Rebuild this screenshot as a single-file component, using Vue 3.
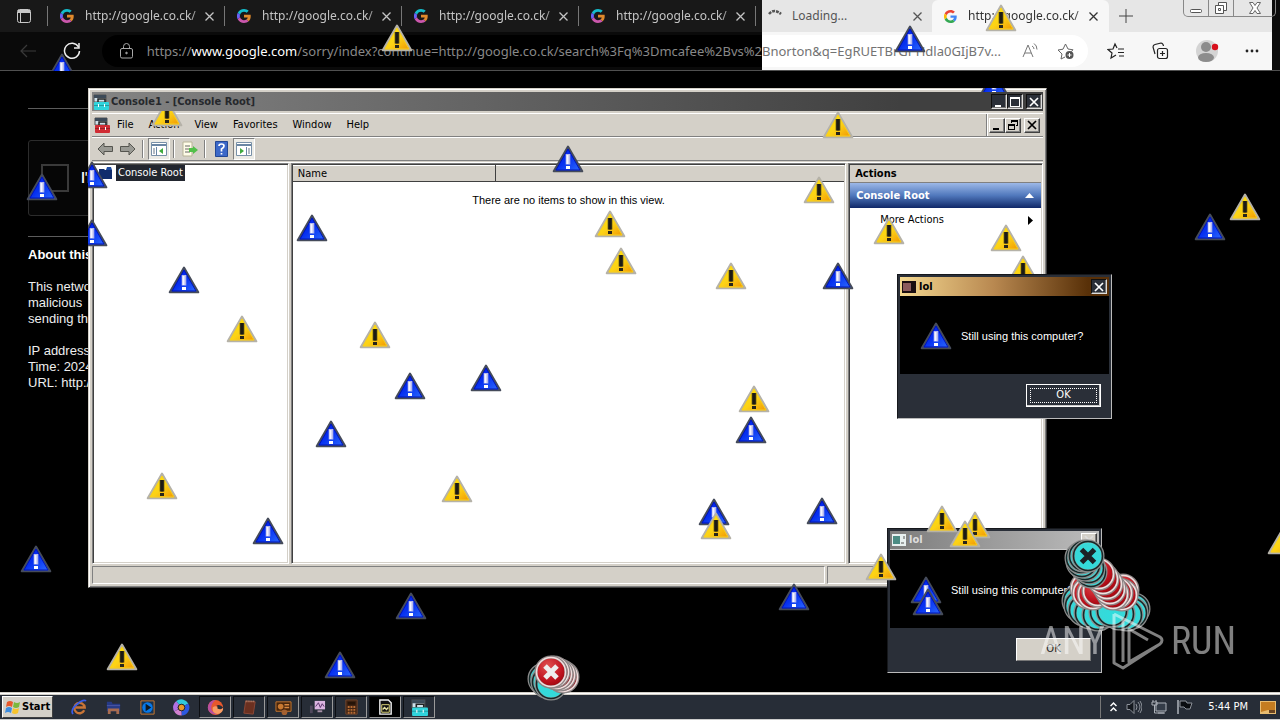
<script setup>
const tabs = [1, 2, 3, 4]

const warnings = [
  ['blue', 42, 187], ['blue', 184, 280], ['blue', 312, 228], ['blue', 568, 159],
  ['blue', 838, 276], ['blue', 410, 386], ['blue', 486, 378], ['blue', 331, 434],
  ['blue', 751, 430], ['blue', 714, 512], ['blue', 822, 511], ['blue', 268, 531],
  ['blue', 36, 559], ['blue', 411, 606], ['blue', 340, 665], ['blue', 794, 597],
  ['blue', 1210, 227], ['blue', 910, 39], ['blue', 928, 602],
  ['blue', 62, 67, 'inset(0 0 10px 0)'],
  ['blue', 994, 84, 'inset(18px 0 6px 0)'],
  ['blue', 92, 175, 'inset(0 0 0 12px)'],
  ['blue', 92, 233, 'inset(0 0 0 12px)'],
  ['gold', 397, 38], ['gold', 1001, 18], ['gold', 167, 113, 'inset(12px 0 0 0)'],
  ['gold', 838, 125], ['gold', 819, 190], ['gold', 610, 224], ['gold', 621, 261],
  ['gold', 731, 276], ['gold', 889, 231], ['gold', 1006, 238],
  ['gold', 1023, 269, 'inset(0 0 9px 0)'], ['gold', 242, 329], ['gold', 375, 335],
  ['gold', 754, 399], ['gold', 162, 486], ['gold', 457, 489], ['gold', 716, 526],
  ['gold', 122, 657], ['gold', 942, 519], ['gold', 975, 525], ['gold', 965, 534],
  ['gold', 881, 567], ['gold', 1245, 207], ['gold', 1283, 541]
].map(([kind, x, y, clip]) => ({
  kind,
  style: { left: x - 16 + 'px', top: y - 14 + 'px', clipPath: clip || 'none' }
}))

const errors = [
  ['teal', 544, 679], ['teal', 547, 682], ['teal', 551, 684],
  ['red', 563, 677], ['red', 560, 675], ['red', 557, 674], ['red', 554, 672], ['red', 551, 672, true],
  ['teal', 1078, 601], ['teal', 1080, 606], ['teal', 1084, 610],
  ['teal', 1090, 613], ['teal', 1098, 615], ['teal', 1105, 612],
  ['teal', 1134, 609], ['teal', 1132, 613], ['teal', 1127, 615], ['teal', 1119, 614], ['teal', 1112, 611],
  ['red', 1086, 588], ['red', 1088, 593], ['red', 1093, 594], ['red', 1098, 591],
  ['red', 1123, 590], ['red', 1122, 595], ['red', 1117, 593], ['red', 1113, 594],
  ['red', 1110, 589], ['red', 1107, 584], ['red', 1103, 579], ['red', 1099, 574],
  ['teal', 1091, 572], ['teal', 1089, 568], ['teal', 1085, 565], ['teal', 1082, 562],
  ['teal', 1081, 558], ['teal', 1084, 556], ['teal', 1088, 556, true]
].map(([kind, x, y, cross]) => ({ kind, cross, style: { left: x - 17 + 'px', top: y - 17 + 'px' } }))

const menus = ['File', 'Action', 'View', 'Favorites', 'Window', 'Help']
</script>

<template>
  <main class="desktop">
    <svg class="defs" aria-hidden="true">
      <defs>
        <linearGradient id="blueFill" x1="0" y1="0" x2="1" y2="1">
          <stop offset="0" stop-color="#0018e8" /><stop offset=".5" stop-color="#0630f0" /><stop offset="1" stop-color="#3070ff" />
        </linearGradient>
        <linearGradient id="goldFill" x1="0" y1="0" x2="1" y2="1">
          <stop offset="0" stop-color="#fff200" /><stop offset=".55" stop-color="#fcd116" /><stop offset="1" stop-color="#f09000" />
        </linearGradient>
        <radialGradient id="redFill" cx=".4" cy=".3" r=".8">
          <stop offset="0" stop-color="#e05050" /><stop offset=".6" stop-color="#c01420" /><stop offset="1" stop-color="#900008" />
        </radialGradient>
        <radialGradient id="tealFill" cx=".5" cy=".6" r=".7">
          <stop offset="0" stop-color="#30dcdc" /><stop offset=".7" stop-color="#38d8d8" /><stop offset="1" stop-color="#58f0ec" />
        </radialGradient>
      </defs>
      <symbol id="warn-blue" viewBox="0 0 32 28">
        <path d="M16 1.500 30.300 26.300H1.700z" fill="url(#blueFill)" stroke="#454b5a" stroke-width="2" stroke-linejoin="round" />
        <path d="M16 4 28 25H4z" fill="none" stroke="#0014b8" />
        <path d="M13.700 9h4.600v10.500h-4.600z" fill="#b4b8ec" /><path d="M14 21h4v3h-4z" fill="#fff" />
        <path d="M14.500 10h2v9h-2z" fill="#f4f4ff" />
      </symbol>
      <symbol id="warn-gold" viewBox="0 0 32 28">
        <path d="M16 1.500 30.300 26.300H1.700z" fill="url(#goldFill)" stroke="#b5b2a8" stroke-width="2" stroke-linejoin="round" />
        <path d="M16 4 28 25H4z" fill="none" stroke="#f7cf20" />
        <path d="M13.700 8h4.600v11.500h-4.600z" fill="#4c4518" /><path d="M14.500 8h3v11.500h-3z" fill="#1c1a14" /><path d="M14 21h4v3h-4z" fill="#28251a" />
      </symbol>
      <symbol id="err-red" viewBox="0 0 34 34">
        <circle cx="17" cy="17" r="15" fill="url(#redFill)" stroke="#8b8585" stroke-width="3" />
        <circle cx="17" cy="17" r="14.500" fill="none" stroke="#f3dede" stroke-width="1.500" />
      </symbol>
      <symbol id="cross-red" viewBox="0 0 34 34"><path d="m11 11 12 12M23 11 11 23" stroke="#eee" stroke-width="5" /></symbol>
      <symbol id="err-teal" viewBox="0 0 34 34">
        <circle cx="17" cy="17" r="15" fill="url(#tealFill)" stroke="#8c8c8c" stroke-width="3" />
        <circle cx="17" cy="17" r="14.500" fill="none" stroke="#142828" stroke-width="1.500" />
      </symbol>
      <symbol id="cross-teal" viewBox="0 0 34 34"><path d="m10.500 10.500 13 13M23.500 10.500l-13 13" stroke="#1c2226" stroke-width="5" /></symbol>
      <symbol id="toolbox" viewBox="0 0 16 16">
        <path d="M1 1h12v7H1z" fill="#cfe0ea" stroke="#555" /><path d="M1 1h12v3H1z" fill="#3c4a58" />
        <path d="M5 8V5h7v3" fill="none" stroke="#222" stroke-width="1.500" />
        <rect x="1" y="8" width="15" height="8" rx="1" fill="currentColor" /><path d="M1 11.500h15" stroke="#0004" /><path d="M5 10h1v3H5zM11 10h1v3h-1z" fill="#fff" />
      </symbol>
      <symbol id="g-logo" viewBox="0 0 48 48">
        <path fill="var(--r)" d="M24 9.500c3.500 0 6.700 1.200 9.200 3.600l6.900-6.900C35.900 2.400 30.500 0 24 0 14.600 0 6.500 5.400 2.600 13.200l8 6.200C12.400 13.700 17.700 9.500 24 9.500z" />
        <path fill="var(--b)" d="M47 24.600c0-1.600-.2-3.100-.4-4.600H24v9h12.900c-.6 3-2.200 5.500-4.700 7.200l7.700 6C44.400 38 47 31.800 47 24.600z" />
        <path fill="var(--y)" d="M10.500 28.600A14.500 14.500 0 0 1 10.500 19.400l-8-6.200a24 24 0 0 0 0 21.600z" />
        <path fill="var(--g)" d="M24 48c6.500 0 11.900-2.100 15.900-5.800l-7.700-6c-2.200 1.500-4.900 2.300-8.200 2.300-6.300 0-11.600-4.200-13.500-9.900l-8 6.200C6.500 42.600 14.600 48 24 48z" />
      </symbol>
    </svg>

    <header class="browser">
      <div class="strip dark">
        <button class="lead" aria-label="Tab actions">
          <svg width="16" height="16" viewBox="0 0 16 16" fill="none" stroke="#c8c8c8"><rect x="1.500" y="1.500" width="13" height="13" rx="2" /><path d="M2 3.500h12" stroke-width="3" /><path d="M4.500 5v9" /></svg>
        </button>
        <div v-for="t in tabs" :key="t" class="tab">
          <svg class="fav inv" width="14" height="14"><use href="#g-logo" /></svg>
          <span class="tabname fade">http://google.co.ck/</span>
          <button class="x" aria-label="Close tab"><svg width="9" height="9" viewBox="0 0 9 9" stroke="currentColor" stroke-width="1.300"><path d="m.5.5 8 8m0-8-8 8" /></svg></button>
        </div>
        <i class="sep"></i>
      </div>
      <div class="strip light">
        <div class="tab loading">
          <svg class="spin" width="14" height="14" viewBox="0 0 14 14" fill="none" stroke="#555" stroke-width="2.500"><path d="M1 5Q6-1 13 5" stroke-dasharray="3 1" /></svg>
          <span class="tabname">Loading...</span>
          <button class="x" aria-label="Close tab"><svg width="9" height="9" viewBox="0 0 9 9" stroke="currentColor" stroke-width="1.300"><path d="m.5.5 8 8m0-8-8 8" /></svg></button>
        </div>
        <div class="tab current">
          <svg class="fav" width="13" height="13"><use href="#g-logo" /></svg>
          <span class="tabname fade">http://google.co.ck/</span>
          <button class="x" aria-label="Close tab"><svg width="9" height="9" viewBox="0 0 9 9" stroke="currentColor" stroke-width="1.300"><path d="m.5.5 8 8m0-8-8 8" /></svg></button>
        </div>
        <button class="plus" aria-label="New tab"><svg width="14" height="14" viewBox="0 0 14 14" stroke="#444"><path d="M7 0v14M0 7h14" /></svg></button>
        <div class="aero">
          <button aria-label="Minimize"><svg width="14" height="14" viewBox="0 0 14 14" fill="#fff" stroke="#555"><rect x="1.500" y="8.500" width="11" height="3" rx="1" /></svg></button>
          <button aria-label="Restore"><svg width="14" height="14" viewBox="0 0 14 14" fill="#fff" stroke="#555"><path d="M4.500 1.500h8v8h-8z" /><path d="M1.500 4.500h8v8h-8z" /><path d="M4.500 7.500h2v2h-2z" /></svg></button>
          <button class="wide" aria-label="Close"><svg width="14" height="14" viewBox="0 0 14 14" fill="#fff" stroke="#666"><path d="M1.500 1.500h3.500l2 3 2-3h3.500L9 7l3.500 5.500H9l-2-3-2 3H1.500L5 7z" /></svg></button>
        </div>
      </div>

      <div class="bar dark">
        <button class="nav" aria-label="Back"><svg width="16" height="14" viewBox="0 0 16 14" fill="none" stroke="#3a3a3a" stroke-width="1.200"><path d="M16 7H1M7 1 1 7l6 6" /></svg></button>
        <button class="nav reload" aria-label="Refresh"><svg width="18" height="18" viewBox="0 0 18 18" fill="none" stroke="#eee" stroke-width="1.500"><path d="M15.500 5A7.500 7.500 0 1 0 16.500 9" /><path d="M16 1v5h-5" /></svg></button>
        <div class="pill left">
          <svg class="lock" width="13" height="16" viewBox="0 0 13 16" fill="none" stroke="#a8a8a8"><rect x=".5" y="5.500" width="12" height="9.500" rx="1.500" /><path d="M3.500 5V3.500a3 3 0 0 1 6 0V5" /><circle cx="6.500" cy="10" r=".8" fill="#aaa" /></svg>
          <span class="url">https://<b>www.google.com</b>/sorry/index?continue=http://google.co.ck/search%3Fq%3Dmcafee%2Bvs%2</span>
        </div>
      </div>
      <div class="bar light">
        <div class="pill right">
          <span class="url">Bnorton&amp;q=EgRUETBrGPHdla0GIjB7v...</span>
          <button class="ic" aria-label="Read aloud"><svg width="18" height="18" viewBox="0 0 18 18" fill="none" stroke="#777"><path d="m2 15 5-12 5 12M4 11h6M11 4q2 1 2 3M13 1.500q3 2 3 6" /></svg></button>
          <button class="ic" aria-label="Add to favorites"><svg width="18" height="18" viewBox="0 0 18 18" fill="none" stroke="#666"><path d="M8 15 4 17l1-5-4-4 5-.8L8.500 2 11 7l5 .8-2 2" /><circle cx="12.500" cy="13" r="4" fill="#555" stroke="none" /><path d="M12.500 11v4m-2-2h4" stroke="#fff" /></svg></button>
        </div>
        <button class="ic" aria-label="Favorites"><svg width="18" height="18" viewBox="0 0 18 18" fill="none" stroke="#222" stroke-width="1.200"><path d="m10 6-2-4-2 5-5 .5L5 11l-1 5 5-3M11 7h6m-6 3.500h6M12 14h5" /></svg></button>
        <button class="ic" aria-label="Collections"><svg width="18" height="18" viewBox="0 0 18 18" fill="none" stroke="#222" stroke-width="1.200"><rect x="6.500" y="6.500" width="10" height="10" rx="2" /><path d="M11.500 9v5M9 11.500h5M4 12 2 5q0-2 2-2.500L10 1q2 0 2.500 3" /></svg></button>
        <button class="ic" aria-label="Profile"><svg width="24" height="24" viewBox="0 0 24 24"><circle cx="12" cy="12" r="11" fill="#d4d4d4" /><circle cx="11" cy="8" r="5" fill="#8c8c8c" /><ellipse cx="11" cy="18.500" rx="8" ry="4.500" fill="#8c8c8c" /><circle cx="20" cy="8" r="3.200" fill="#d8101c" /></svg></button>
        <button class="ic" aria-label="More"><svg width="14" height="4" viewBox="0 0 14 4" fill="#222"><circle cx="2" cy="2" r="1.400" /><circle cx="7" cy="2" r="1.400" /><circle cx="12" cy="2" r="1.400" /></svg></button>
      </div>
    </header>

    <section class="page">
      <hr />
      <label class="captcha"><input type="checkbox" /><span>I'm not a robot</span></label>
      <hr />
      <h1>About this page</h1>
      <p>This network<br />malicious<br />sending the</p>
      <p>IP address:<br />Time: 2024<br />URL: http://</p>
    </section>

    <section class="console win">
      <div class="caption">
        <svg class="teal" width="16" height="16"><use href="#toolbox" /></svg>
        <h2>Console1 - [Console Root]</h2>
        <button class="cb night" aria-label="Minimize"><svg viewBox="0 0 12 10"><path d="M2 8h6v2H2z" /></svg></button>
        <button class="cb night" aria-label="Maximize"><svg viewBox="0 0 12 10"><path d="M1 0h10v10H1zM2 2v7h8V2z" fill-rule="evenodd" /></svg></button>
        <button class="cb night gap" aria-label="Close"><svg viewBox="0 0 12 10"><path d="m2 1 8 8m0-8-8 8" stroke="currentColor" stroke-width="1.700" /></svg></button>
      </div>
      <div class="menu">
        <svg class="redbox" width="16" height="16"><use href="#toolbox" /></svg>
        <button v-for="m in menus" :key="m">{{ m }}</button>
        <div class="mdi">
          <button class="cb" aria-label="Minimize console"><svg viewBox="0 0 12 10"><path d="M2 8h6v2H2z" /></svg></button>
          <button class="cb" aria-label="Restore console"><svg viewBox="0 0 12 10"><path d="M4 0h7v6H9V5h1V2H5v1H4zM1 4h7v6H1zM2 6v3h5V6z" fill-rule="evenodd" /></svg></button>
          <button class="cb gap" aria-label="Close console"><svg viewBox="0 0 12 10"><path d="m2 1 8 8m0-8-8 8" stroke="currentColor" stroke-width="1.700" /></svg></button>
        </div>
      </div>
      <div class="tools">
        <button aria-label="Back"><svg width="16" height="14" viewBox="0 0 16 14" fill="#9a9a94" stroke="#55554f"><path d="M1 7 7 1v3.500h8.500v5H7V13z" /></svg></button>
        <button aria-label="Forward"><svg width="16" height="14" viewBox="0 0 16 14" fill="#9a9a94" stroke="#55554f"><path d="M15 7 9 1v3.500H.5v5H9V13z" /></svg></button>
        <i></i>
        <button class="on" aria-label="Show tree"><svg width="16" height="14" viewBox="0 0 16 14"><path d="M.5.5h15v13H.5z" fill="#fff" stroke="#7890a8" /><path d="M1 3h14" stroke="#6a86a4" stroke-width="2" /><path d="M5.500 5v8" stroke="#6a86a4" /><path d="M2 7h2M2 9h2M2 11h2" stroke="#678" /><path d="m12 6-4 3 4 3z" fill="#3faa3f" /></svg></button>
        <i></i>
        <button aria-label="Export list"><svg width="17" height="16" viewBox="0 0 17 16"><path d="M1 1h9v14H1z" fill="#fffce8" stroke="#b8b498" /><path d="M3 5h5M3 8h5M3 11h5" stroke="#666" /><path d="M7 7h4V5l5 4-5 4v-2H7z" fill="#52c04a" /></svg></button>
        <i></i>
        <button aria-label="Help"><svg width="13" height="16" viewBox="0 0 13 16"><path d="M.5.5h12v15H.5z" fill="#3c68c8" stroke="#234794" /><path d="M4 5q0-2 2.500-2T9 5q0 1.500-2.500 3v2.500M6.500 12v1.500" fill="none" stroke="#fff" stroke-width="1.700" /></svg></button>
        <button class="on" aria-label="Show action pane"><svg width="16" height="14" viewBox="0 0 16 14"><path d="M.5.5h15v13H.5z" fill="#fff" stroke="#7890a8" /><path d="M1 3h14" stroke="#6a86a4" stroke-width="2" /><path d="M10.500 5v8" stroke="#6a86a4" /><path d="M12 7h2M12 9h2M12 11h2" stroke="#678" /><path d="m4 6 4 3-4 3z" fill="#3faa3f" /></svg></button>
      </div>
      <div class="panes">
        <div class="pane tree">
          <div class="node"><svg width="15" height="14" viewBox="0 0 15 14"><path d="M1 3h5l1 1h7v9H1z" fill="#102c6c" /><path d="M9 1h4l1 3H8z" fill="#1c4aa0" /></svg><span>Console Root</span></div>
        </div>
        <div class="pane list">
          <div class="cols"><span>Name</span><span></span></div>
          <p>There are no items to show in this view.</p>
        </div>
        <div class="pane actions">
          <h3>Actions</h3>
          <button class="group">Console Root<svg width="9" height="5" viewBox="0 0 9 5"><path d="M0 5 4.500 0 9 5z" fill="#fff" /></svg></button>
          <button class="more">More Actions<svg width="5" height="9" viewBox="0 0 5 9"><path d="m0 0 5 4.500L0 9z" /></svg></button>
        </div>
      </div>
      <div class="status"><span></span><span></span><span></span></div>
    </section>

    <section class="dialog win first">
      <div class="caption">
        <svg width="14" height="12" viewBox="0 0 14 12"><path d="M0 0h14v12H0z" fill="#1a0d10" /><path d="M1 2h8v8H1z" fill="#8c5a5c" /></svg>
        <h2>lol</h2>
        <button class="cb night" aria-label="Close"><svg viewBox="0 0 12 10"><path d="m2 1 8 8m0-8-8 8" stroke="currentColor" stroke-width="1.700" /></svg></button>
      </div>
      <div class="msg"><svg width="32" height="28"><use href="#warn-blue" /></svg><p>Still using this computer?</p></div>
      <div class="foot"><button class="ok focus">OK</button></div>
    </section>

    <section class="dialog win second">
      <div class="caption">
        <svg width="14" height="12" viewBox="0 0 14 12"><path d="M0 0h14v12H0z" fill="#e8f0f0" /><path d="M1 2h7v8H1z" fill="#4c8c84" /><path d="M12 2v3M9 9h3" stroke="#555" /></svg>
        <h2>lol</h2>
        <button class="cb" aria-label="Close"><svg viewBox="0 0 12 10"><path d="m2 1 8 8m0-8-8 8" stroke="currentColor" stroke-width="1.700" /></svg></button>
      </div>
      <div class="msg"><svg width="32" height="28"><use href="#warn-blue" /></svg><p>Still using this computer?</p></div>
      <div class="foot"><button class="ok">OK</button></div>
    </section>

    <footer class="taskbar">
      <button class="start">
        <svg width="16" height="16" viewBox="0 0 16 16"><path d="M2 3q3-2 6 0L7 8Q4 6 1 8z" fill="#e8582c" /><path d="M9 3q3 2 6 0l-1 5q-3 2-6 0z" fill="#7cb83c" /><path d="M1 9q3-2 6 0l-1 5q-3-2-6 0z" fill="#3c8ce0" /><path d="M8 9q3 2 6 0l-1 5q-3 2-6 0z" fill="#f8c42c" /></svg>
        Start
      </button>
      <div class="apps">
        <button aria-label="Internet Explorer"><svg viewBox="0 0 18 18" fill="none"><path d="M14 12a5.500 5.500 0 1 1 .5-3H5" stroke="#c87436" stroke-width="2.500" /><path d="M2 16Q-1 11 7 5q6-5 9-3" stroke="#385ce8" stroke-width="1.800" /></svg></button>
        <button aria-label="Explorer"><svg viewBox="0 0 18 18"><path d="M2 3h5l1 2h8v8H2z" fill="#263a86" /><path d="M3 10h12v6h-3v-3H6v3H3z" fill="#a86c50" /><path d="M2 7h14" stroke="#4c58a8" /></svg></button>
        <button aria-label="Media Player"><svg viewBox="0 0 18 18"><path d="M2 2h14v14H2z" fill="#163454" stroke="#cd7a30" /><circle cx="9" cy="9" r="5.500" fill="#0878e8" /><path d="m7 5 6 4-6 4z" fill="#101820" /></svg></button>
        <button aria-label="Chrome"><svg viewBox="0 0 18 18" fill="none" stroke-width="5"><path d="M3.500 12A6 6 0 0 1 5 4" stroke="#b070e0" /><path d="M5 4a6 6 0 0 1 9 2" stroke="#30c8dc" /><path d="M14 6a6 6 0 0 1-5 9" stroke="#2c58e0" /><path d="M9 15a6 6 0 0 1-5.500-3" stroke="#d080d0" /><circle cx="9" cy="9" r="3.500" fill="#e89828" stroke="#222" stroke-width="1" /></svg></button>
        <button class="open" aria-label="Edge"><svg viewBox="0 0 18 18"><circle cx="9" cy="9" r="8" fill="#e8582c" /><path d="M2 13A8 8 0 0 1 9 1Q3 6 5 12q2 3 6 4-6 1-9-3z" fill="#b850a0" /><path d="M17 9q-2 3-5 1-2-4-6-1-1 6 5 7 5-1 6-5z" fill="#f89c64" /><path d="M17 9q-2 3-6 1 1-2-1-3 4-2 7 2z" fill="#272d37" /></svg></button>
        <button class="open" aria-label="Notepad"><svg viewBox="0 0 18 18"><path d="m5 2 10 1-2 13-10-1z" fill="#6b3020" stroke="#8c4836" /><path d="M5 2.500h10" stroke="#bb8870" stroke-dasharray="1 1" stroke-width="2" /></svg></button>
        <button class="open" aria-label="System"><svg viewBox="0 0 18 18"><path d="M1 3h16v10H1z" fill="#48260c" stroke="#c87830" /><circle cx="6" cy="8" r="3" fill="#c87830" /><path d="M10 6h5M10 9h5" stroke="#d88840" stroke-width="1.500" /><circle cx="10" cy="14" r="3" fill="#a46030" /></svg></button>
        <button class="open" aria-label="Performance"><svg viewBox="0 0 18 18"><path d="M6 2h11v9H6z" fill="#dbb4e0" /><path d="m7 8 3-4 2 5 2-4 2 3" fill="none" stroke="#583068" /><path d="M1 7h3v8H1z" fill="#50485c" /><path d="M9 12h5v2H9z" fill="#a890a8" /></svg></button>
        <button class="open" aria-label="Calculator"><svg viewBox="0 0 18 18"><path d="M3 1h12v15H3z" fill="#402414" stroke="#75462c" /><path d="M5 3h8v3H5z" fill="#261408" /><path d="M5 8.500h8M5 11.500h8M5 14.500h8" stroke="#b86c34" stroke-width="2" stroke-dasharray="2 1" /></svg></button>
        <button class="open active" aria-label="Command"><svg viewBox="0 0 18 18" fill="none"><path d="M3 1h9l3 3v12H3z" fill="#101010" stroke="#eee" stroke-width="1.500" /><path d="M5 6h8v8H5z" stroke="#e0d878" /><path d="m6 11 2-2 2 2 2-2" stroke="#e8e4a0" stroke-width="1.500" /></svg></button>
        <button class="open" aria-label="Console"><svg class="teal" viewBox="0 0 18 18"><use href="#toolbox" width="18" height="18" /></svg></button>
      </div>
      <div class="tray">
        <svg width="7" height="12" viewBox="0 0 7 12" fill="none" stroke="#fff" stroke-width="1.500"><path d="m.5 5 3-3 3 3m-6 5 3-3 3 3" /></svg>
        <svg width="16" height="16" viewBox="0 0 16 16" fill="none" stroke="#8d929a"><path d="M1 5.500h3l4-4v13l-4-4H1z" fill="#14181e" /><path d="M10 5q2 3 0 6M12 3q4 5 0 10M14 2q4 6 0 12" /></svg>
        <svg width="16" height="16" viewBox="0 0 16 16" fill="none" stroke="#adb2ba"><path d="M5 4h10v8H5z" fill="#343c48" /><path d="M2 1v2M5 1v2M1 3h5v3H1zM3.500 6v8H13M7 14h7" /></svg>
        <svg width="17" height="16" viewBox="0 0 17 16" fill="none" stroke="#8d929a"><path d="M2 1v14" stroke-width="2" /><path d="M4 2h6l1 2h5l-2 6h-4L8 8H4z" fill="#0a0c10" /></svg>
        <time>5:44 PM</time>
        <svg width="16" height="13" viewBox="0 0 16 13"><path d="M0 0h16v13H0z" fill="#e8bc70" /><path d="M1 1h14v8L8 9l-7 2z" fill="#c47c20" /><path d="M9 9h6v3H9z" fill="#6b4420" /></svg>
      </div>
    </footer>

    <svg v-for="(w, i) in warnings" :key="'w' + i" class="sprite tri" :style="w.style"><use :href="'#warn-' + w.kind" /></svg>
    <svg v-for="(e, i) in errors" :key="'e' + i" class="sprite disc" :style="e.style">
      <use :href="'#err-' + e.kind" /><use v-if="e.cross" :href="'#cross-' + e.kind" />
    </svg>

    <div class="watermark">
      <span>ANY</span>
      <svg width="54" height="60" viewBox="0 0 54 60" fill="none" stroke="#fff" stroke-width="3" stroke-linejoin="round"><path d="M3 3v49l9 5 37-24M3 3l46 23q4 3 0 7L18 51V18l19 11M12 8v43" /></svg>
      <span>RUN</span>
    </div>
  </main>
</template>

<style>
html, body { margin: 0; background: #000; }
</style>

<style scoped>
* { box-sizing: border-box; }
button { font: inherit; color: inherit; border: 0; padding: 0; margin: 0; background: none; }
h1, h2, h3, p { margin: 0; font-size: inherit; }
svg { display: block; flex: none; }
.defs { position: absolute; width: 0; height: 0; }
.desktop { position: relative; min-height: 100vh; overflow: hidden; background: #000; color: #000; display: flex; flex-direction: column; font: 11px/14px "DejaVu Sans Condensed", "Noto Sans", sans-serif; }

.browser { display: grid; grid-template-columns: 762fr 510fr 8px; grid-template-rows: 32px 38px; border-bottom: 1px solid #505050; background: #0c0c0c; font-family: "Noto Sans", sans-serif; }
.strip, .bar { display: flex; align-items: center; min-width: 0; }
.strip.dark { background: #181818; color: #c4c4c4; grid-column: 1; }
.strip.light { background: #e6e6e6; color: #555; grid-column: 2; }
.bar.dark { background: #0a0a0a; grid-column: 1; }
.bar.light { background: #f7f7f7; grid-column: 2; }
.lead { width: 47px; display: flex; justify-content: center; }
.tab { flex: 1; min-width: 0; height: 20px; display: flex; align-items: center; padding: 0 10px 0 12px; border-left: 1px solid #777; font-size: 12px; line-height: 16px; }
.fav { --r: #ea4335; --b: #4285f4; --y: #fbbc05; --g: #34a853; margin-right: 11px; }
.fav.inv { --r: #15bcca; --b: #e08a2c; --y: #6a62f8; --g: #cb57ac; }
.tabname { flex: 1; min-width: 0; overflow: hidden; white-space: nowrap; }
.fade { -webkit-mask-image: linear-gradient(90deg, #000 90%, #0006); mask-image: linear-gradient(90deg, #000 90%, #0006); }
.x { display: flex; margin-left: 4px; }
.sep { width: 7px; height: 20px; border-left: 1px solid #777; }
.strip.light .tab { height: 32px; border: 0; flex: 0 1 177px; }
.strip.light .tab.loading { flex-basis: 170px; padding-left: 6px; }
.spin { margin-right: 10px; }
.strip.light .tab.current { background: #f7f7f7; color: #333; border-radius: 6px 6px 0 0; padding-right: 11px; }
.plus { display: flex; margin-left: 10px; }
.aero { display: flex; align-self: flex-start; margin-left: auto; margin-right: -4px; z-index: 1; border: 1px solid #888; border-top: 0; border-radius: 0 0 5px 5px; }
.aero button { width: 25px; height: 16px; display: flex; justify-content: center; align-items: center; border-right: 1px solid #888; }
.aero .wide { width: 41px; border: 0; }
.nav { width: 56px; display: flex; justify-content: center; }
.nav.reload { width: 32px; }
.pill { flex: 1; min-width: 0; height: 32px; display: flex; align-items: center; font-size: 13px; line-height: 20px; color: #888; }
.pill.left { margin-left: 14px; border-radius: 16px 0 0 16px; background: #000; padding-left: 18px; }
.pill.right { background: #fff; border-radius: 0 16px 16px 0; color: #737373; margin-right: 19px; padding-right: 13px; gap: 18px; }
.lock { margin-right: 10px; }
.url { white-space: nowrap; min-width: 0; overflow: hidden; flex: 1; }
.url b { font-weight: 400; color: #fff; }
.pill.left .url { display: flex; justify-content: flex-end; }
.ic { display: flex; }
.bar.light > .ic + .ic { margin-left: 26px; }
.bar.light > .ic:last-child { margin-right: 13px; }

.page { width: 400px; max-width: 100%; padding: 37px 0 0 28px; color: #eee; font: 13px/16px "Liberation Sans", Arial, sans-serif; }
.page hr { margin: 0; border: 0; height: 1px; background: #5c5c5c; }
.page h1 { font-weight: 700; margin-top: 10px; color: #fff; }
.page p { margin-top: 16px; }
.captcha { display: flex; align-items: center; gap: 12px; width: 304px; height: 76px; margin: 31px 0 20px; padding-left: 12px; border: 1px solid #2c2c2c; border-radius: 3px; background: #060606; color: #fff; font: 500 14px "Roboto", sans-serif; }
.captcha input { appearance: none; width: 28px; height: 28px; margin: 0; border: 2px solid #3a3a3a; background: #060606; }

.win { position: absolute; background: #d4d0c8; display: flex; flex-direction: column; padding: 4px; }
.console { left: 88px; top: 88px; right: 233px; height: 500px; border: 1px solid; border-color: #d4d0c8 #404040 #404040 #d4d0c8; box-shadow: inset 1px 1px #fff, inset -1px -1px #808080; padding: 3px; }
.caption { display: flex; align-items: center; height: 19px; padding: 0 1px; font-weight: 700; }
.caption h2 { flex: 1; margin-left: 2px; font-weight: 700; white-space: nowrap; }
.console .caption { background: linear-gradient(90deg, #848484, #404040 85%); color: #26282c; }
.teal { color: #30d4dc; }
.redbox { color: #d02c34; margin-right: 5px; }
.cb { width: 16px; height: 15px; display: flex; align-items: center; justify-content: center; flex: none; background: #d4d0c8; border: 1px solid; border-color: #fff #404040 #404040 #fff; box-shadow: inset -1px -1px #808080; }
.cb svg { width: 12px; height: 10px; fill: currentColor; }
.cb.night { background: #2a2f38; color: #fff; border-color: #101010 #ddd #ddd #101010; box-shadow: inset -1px -1px #777; }
.cb.gap { margin-left: 3px; }
.menu { height: 24px; margin-top: 2px; display: flex; align-items: center; padding-left: 2px; border-top: 1px solid #fff; border-bottom: 1px solid #808080; }
.menu > button { margin-right: 15px; }
.menu > .redbox + button { margin-left: 2px; }
.mdi { margin-left: auto; display: flex; align-items: center; height: 100%; padding: 0 3px 0 2px; border-left: 1px solid #808080; box-shadow: inset 1px 0 #fff; }
.tools { height: 24px; display: flex; align-items: center; padding-left: 2px; gap: 1px; border-top: 1px solid #fff; border-bottom: 1px solid #808080; }
.tools button { width: 22px; height: 22px; display: flex; align-items: center; justify-content: center; }
.tools i { width: 2px; height: 18px; margin: 0 3px 0 2px; border-left: 1px solid #808080; border-right: 1px solid #fff; }
.tools .on { background: #ecebe6; border: 1px solid; border-color: #808080 #fff #fff #808080; }
.panes { flex: 1; min-height: 0; margin-top: 1px; display: grid; grid-template-columns: 197fr 556fr 195fr; gap: 2px; border-top: 1px solid #fff; }
.pane { min-width: 0; background: #fff; border: 1px solid; border-color: #808080 #fff #fff #808080; box-shadow: inset 1px 1px #404040, inset -1px -1px #d4d0c8; padding: 1px; }
.node { display: flex; align-items: center; margin-left: 4px; gap: 3px; }
.node span { background: #22262f; color: #fff; padding: 1px 2px; }
.cols { display: flex; background: #d4d0c8; height: 17px; border-bottom: 1px solid #404040; box-shadow: inset 0 1px #fff; }
.cols span { flex: 352; padding: 2px 5px; border-left: 1px solid #404040; }
.cols span:first-child { flex: 200; border: 0; }
.list p { text-align: center; margin-top: 11px; }
.list p, .msg p { font-family: "Liberation Sans", Arial, sans-serif; }
.actions h3 { height: 18px; padding: 2px 5px; background: #d4d0c8; border-bottom: 1px solid #808080; font-weight: 700; }
.group { width: 100%; height: 25px; padding: 0 7px 0 6px; display: flex; justify-content: space-between; align-items: center; color: #fff; font-weight: 700; background: linear-gradient(#9cb8e8, #5078bc 50%, #102868); }
.more { width: 100%; display: flex; justify-content: space-between; align-items: center; padding: 5px 8px 0 30px; }
.status { height: 18px; margin-top: 2px; display: grid; grid-template-columns: 732fr 140fr 74fr; gap: 2px; }
.status span { border: 1px solid; border-color: #808080 #fff #fff #808080; }

.dialog { width: 215px; height: 145px; background: #2a2f38; border: 1px solid; border-color: #16181c #bbb #bbb #16181c; padding: 2px; color: #fff; }
.first { left: 897px; top: 274px; }
.second { left: 887px; top: 528px; }
.dialog .caption { height: 19px; color: #000; padding: 0 2px; }
.dialog .caption h2 { margin-left: 3px; }
.first .caption { background: linear-gradient(90deg, #f4d890, #b88850 45%, #583008 90%); }
.second .caption { background: linear-gradient(90deg, #7c7c7c, #bcbcbc); color: #ddd; border-bottom: 1px solid #ccc; }
.msg { flex: 1; background: #000; display: flex; align-items: center; gap: 9px; padding: 1px 0 0 20px; }
.foot { height: 42px; display: flex; justify-content: flex-end; align-items: center; padding-right: 8px; }
.ok { width: 75px; height: 23px; background: #d4d0c8; color: #222; border: 1px solid; border-color: #fff #777 #777 #fff; }
.ok.focus { background: #2a2f38; color: #fff; border: 1px solid #fff; box-shadow: inset -1px -1px #ccc; outline: 1px dotted #fff; outline-offset: -5px; }

.taskbar { margin-top: auto; height: 28px; display: flex; align-items: center; background: #272d37; border-top: 1px solid #d4d0c8; border-bottom: 1px solid #ccc; box-shadow: inset 0 1px #fff, inset 0 2px #d4d0c8; padding: 3px 2px 1px; }
.start { height: 22px; width: 51px; padding: 0 3px 0 2px; display: flex; align-items: center; gap: 1px; background: #d4d0c8; font-weight: 700; border: 1px solid; border-color: #fff #404040 #404040 #fff; }
.apps { display: flex; gap: 2px; margin-left: 10px; }
.apps button { width: 32px; height: 22px; display: flex; align-items: center; justify-content: center; border: 1px solid transparent; }
.apps svg { width: 17px; height: 17px; }
.apps .open { border-color: #0c0e12 #9a9a9a #9a9a9a #0c0e12; }
.apps .active { background: #000; }
.tray { margin-left: auto; height: 22px; display: flex; align-items: center; gap: 9px; padding: 0 2px 0 9px; color: #fff; border-left: 1px solid #777; }
.tray time { margin: 0 3px 0 6px; }

.sprite { position: absolute; pointer-events: none; }
.tri { width: 32px; height: 28px; }
.disc { width: 34px; height: 34px; }
.watermark { position: absolute; left: 1040px; top: 611px; display: flex; align-items: center; gap: 6px; color: #fff; opacity: .5; font: 38px/60px "Liberation Sans Narrow", "Roboto Condensed", "Noto Sans", sans-serif; }
</style>
